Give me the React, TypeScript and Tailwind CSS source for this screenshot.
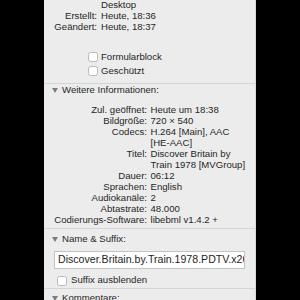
import React from "react";

const font = { fontFamily: '"Liberation Sans", Arial, sans-serif' };

function Tri() {
  return (
    <svg width="6" height="5" viewBox="0 0 6 5" className="shrink-0">
      <path d="M0 0 L6 0 L3 5 Z" fill="#7d7d7d" />
    </svg>
  );
}

function Box() {
  return (
    <div className="w-[10px] h-[10px] rounded-[2.5px] bg-white border border-[#b9b9b9] shrink-0" />
  );
}

function Header({ label }: { label: string }) {
  return (
    <div className="shrink-0 h-[20px] flex items-center pl-[8px] gap-[4px] text-[9.6px] text-[#262626]">
      <Tri />
      <span>{label}</span>
    </div>
  );
}

const info: [string, string[]][] = [
  ["Zul. geöffnet:", ["Heute um 18:38"]],
  ["Bildgröße:", ["720 × 540"]],
  ["Codecs:", ["H.264 [Main], AAC", "[HE-AAC]"]],
  ["Titel:", ["Discover Britain by", "Train 1978 [MVGroup]"]],
  ["Dauer:", ["06:12"]],
  ["Sprachen:", ["English"]],
  ["Audiokanäle:", ["2"]],
  ["Abtastrate:", ["48.000"]],
  ["Codierungs-Software:", ["libebml v1.4.2 +"]],
];

export default function App() {
  return (
    <div className="w-[300px] h-[300px] bg-black flex overflow-hidden" style={font}>
      <div className="ml-[44px] w-[212px] h-full bg-[#ececec] overflow-hidden flex flex-col text-[9.6px] text-[#262626] border-r border-[#d9d9d9]">
        <div className="shrink-0 mt-[-1.5px] flex flex-col">
          {[
            ["", "Desktop"],
            ["Erstellt:", "Heute, 18:36"],
            ["Geändert:", "Heute, 18:37"],
          ].map(([l, v], i) => (
            <div key={i} className="flex h-[11px] leading-[11px] whitespace-nowrap">
              <div className="w-[53px] text-right">{l}</div>
              <div className="pl-[4px]">{v}</div>
            </div>
          ))}
        </div>
        <div className="shrink-0 mt-[18.5px] flex flex-col">
          {["Formularblock", "Geschützt"].map((t) => (
            <div key={t} className="h-[14px] flex items-center pl-[44px] gap-[3px]">
              <Box />
              <span>{t}</span>
            </div>
          ))}
        </div>
        <div className="shrink-0 mt-[5px] h-px bg-[#d5d5d5]" />
        <div className="shrink-0 h-[13px] flex items-center pl-[8px] gap-[4px]">
          <Tri />
          <span>Weitere Informationen:</span>
        </div>
        <div className="shrink-0 mt-[6.5px] flex flex-col">
          {info.map(([l, vs]) => (
            <div key={l} className="flex leading-[11.1px] whitespace-nowrap">
              <div className="w-[103px] text-right shrink-0">{l}</div>
              <div className="pl-[3.5px] flex flex-col">
                {vs.map((v) => (
                  <div key={v}>{v}</div>
                ))}
              </div>
            </div>
          ))}
        </div>
        <div className="shrink-0 mt-[2.5px] h-px bg-[#d5d5d5]" />
        <Header label="Name & Suffix:" />
        <div className="shrink-0 mt-[2px] mx-[10px] h-[18px] bg-white border border-[#c3c3c3] overflow-hidden whitespace-nowrap flex items-center pl-[3px] text-[10.6px] text-[#1e1e1e]">
          Discover.Britain.by.Train.1978.PDTV.x264-MVGroup.mkv
        </div>
        <div className="shrink-0 mt-[4.5px] h-[14px] flex items-center pl-[13px] gap-[4px]">
          <Box />
          <span>Suffix ausblenden</span>
        </div>
        <div className="shrink-0 h-px bg-[#d5d5d5]" />
        <Header label="Kommentare:" />
      </div>
    </div>
  );
}
